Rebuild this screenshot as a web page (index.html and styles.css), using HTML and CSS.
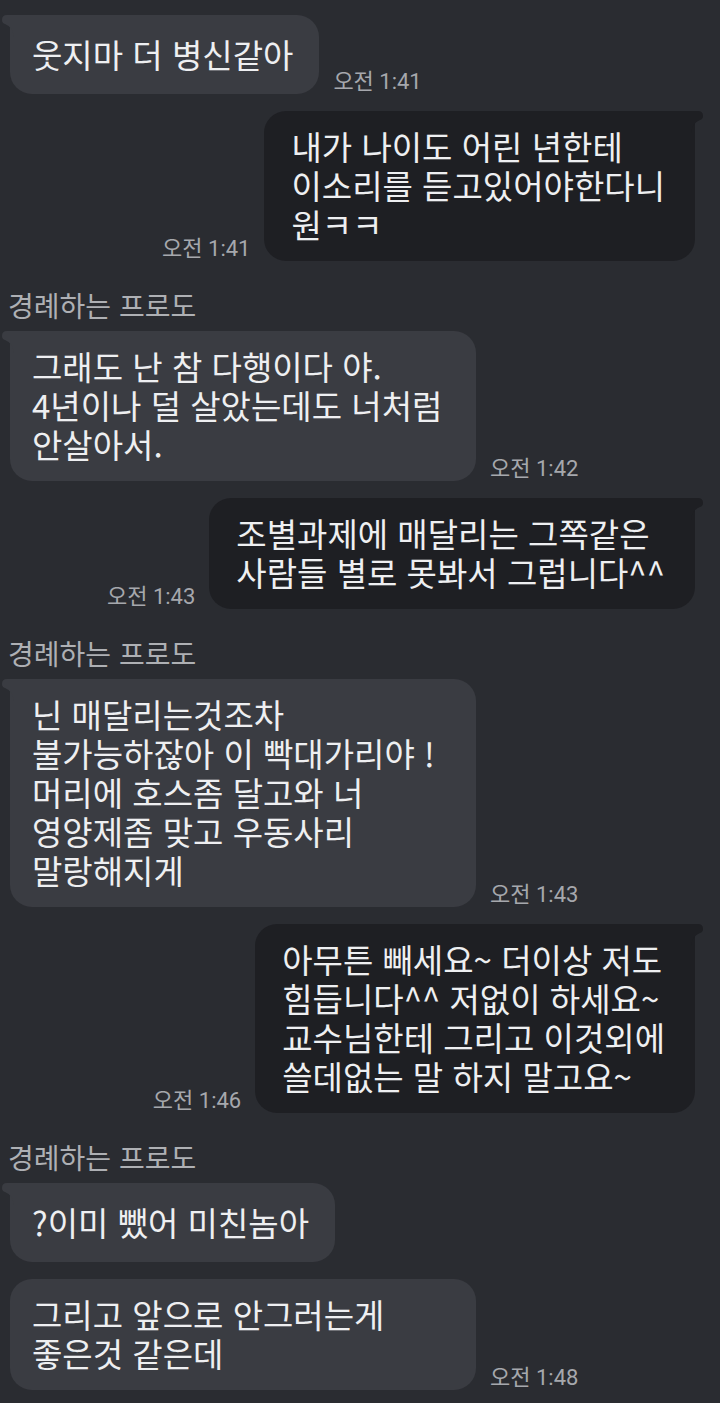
FILE: index.html
```html
<!DOCTYPE html>
<html lang="ko">
<head>
    <meta charset="UTF-8">
    <meta name="viewport" content="width=device-width, initial-scale=1.0">
    <title>채팅</title>
    <link rel="stylesheet" href="styles.css">
</head>
<body>
    <div class="chat">
        <div class="row in">
            <div class="bubble tail">웃지마 더 병신같아</div>
            <span class="time">오전 1:41</span>
        </div>

        <div class="row out">
            <span class="time">오전 1:41</span>
            <div class="bubble tail">내가 나이도 어린 년한테<br>이소리를 듣고있어야한다니<br>원ㅋㅋ</div>
        </div>

        <div class="name">경례하는 프로도</div>
        <div class="row in">
            <div class="bubble tail full">그래도 난 참 다행이다 야.<br>4년이나 덜 살았는데도 너처럼<br>안살아서.</div>
            <span class="time">오전 1:42</span>
        </div>

        <div class="row out">
            <span class="time">오전 1:43</span>
            <div class="bubble tail">조별과제에 매달리는 그쪽같은<br>사람들 별로 못봐서 그럽니다^^</div>
        </div>

        <div class="name">경례하는 프로도</div>
        <div class="row in">
            <div class="bubble tail full">닌 매달리는것조차<br>불가능하잖아 이 빡대가리야 !<br>머리에 호스좀 달고와 너<br>영양제좀 맞고 우동사리<br>말랑해지게</div>
            <span class="time">오전 1:43</span>
        </div>

        <div class="row out">
            <span class="time">오전 1:46</span>
            <div class="bubble tail">아무튼 빼세요~ 더이상 저도<br>힘듭니다^^ 저없이 하세요~<br>교수님한테 그리고 이것외에<br>쓸데없는 말 하지 말고요~</div>
        </div>

        <div class="name">경례하는 프로도</div>
        <div class="row in">
            <div class="bubble tail">?이미 뺐어 미친놈아</div>
        </div>
        <div class="row in">
            <div class="bubble full">그리고 앞으로 안그러는게<br>좋은것 같은데</div>
            <span class="time">오전 1:48</span>
        </div>
    </div>
</body>
</html>
```

FILE: styles.css
```css
body {
    margin: 0;
    padding: 0;
    background-color: #2a2c31;
    color: #eeeff1;
    font-family: "Noto Sans CJK KR", "Noto Sans", sans-serif;
    height: 1403px;
    overflow: hidden;
}
.chat {
    display: flex;
    flex-direction: column;
    gap: 17px;
    padding: 15px 25px 0 10px;
}
.row {
    display: flex;
    align-items: flex-end;
    gap: 14px;
}
.row.out {
    justify-content: flex-end;
}
.bubble {
    position: relative;
    min-height: 79px;
    box-sizing: border-box;
    display: flex;
    align-items: center;
    font-size: 33px;
    line-height: 39px;
    border-radius: 22px;
    white-space: nowrap;
}
.in .bubble {
    background: #3a3c42;
    padding: 16px 26px 17px 22px;
}
.out .bubble {
    background: #1e1f23;
    padding: 16px 30px 17px 27px;
}
.bubble.full {
    width: 466px;
}
/* kształt ogonka dymka */
.in .bubble.tail {
    border-top-left-radius: 0;
}
.out .bubble.tail {
    border-top-right-radius: 0;
}
.bubble.tail::before {
    content: "";
    position: absolute;
    top: 0;
    width: 12px;
    height: 22px;
    background: inherit;
}
.in .bubble.tail::before {
    left: -8px;
    clip-path: path("M0 5 Q0 0 5 0 L12 0 L12 22 Q11 12 3 9 Q0 8 0 5 Z");
}
.out .bubble.tail::before {
    right: -8px;
    clip-path: path("M12 5 Q12 0 7 0 L0 0 L0 22 Q1 12 9 9 Q12 8 12 5 Z");
}
.time {
    font-family: Roboto, "Noto Sans CJK KR", sans-serif;
    font-size: 22px;
    line-height: 24px;
    color: #a6a8ad;
    white-space: nowrap;
}
.name {
    font-size: 28px;
    line-height: 30px;
    color: #aeb0b4;
    margin: 12px 0 -6px -2px;
}
```
